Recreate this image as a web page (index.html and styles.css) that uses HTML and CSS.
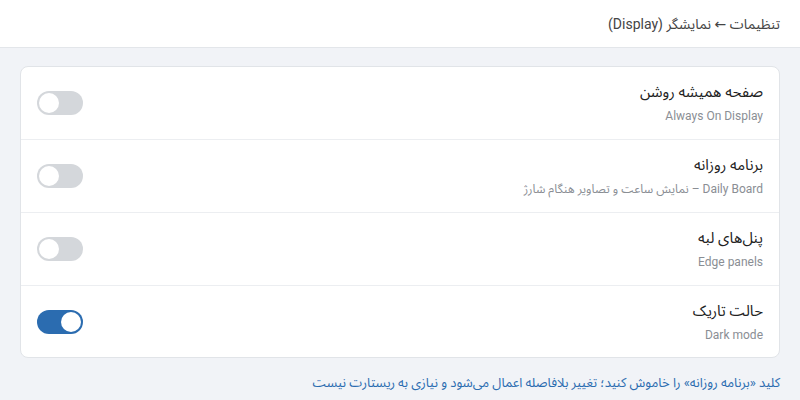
FILE: index.html
```html
<!DOCTYPE html>
<html lang="fa" dir="rtl">
<head>
<meta charset="utf-8">
<link rel="stylesheet" href="styles.css">
</head>
<body>
<header class="top">تنظیمات ← نمایشگر (Display)</header>
<main class="content">
  <section class="card">
    <div class="row">
      <div class="text">
        <div class="title">صفحه همیشه روشن</div>
        <div class="sub">Always On Display</div>
      </div>
      <span class="toggle"><span class="knob"></span></span>
    </div>
    <div class="row">
      <div class="text">
        <div class="title">برنامه روزانه</div>
        <div class="sub">Daily Board – نمایش ساعت و تصاویر هنگام شارژ</div>
      </div>
      <span class="toggle"><span class="knob"></span></span>
    </div>
    <div class="row">
      <div class="text">
        <div class="title">پنل‌های لبه</div>
        <div class="sub">Edge panels</div>
      </div>
      <span class="toggle"><span class="knob"></span></span>
    </div>
    <div class="row">
      <div class="text">
        <div class="title">حالت تاریک</div>
        <div class="sub">Dark mode</div>
      </div>
      <span class="toggle on"><span class="knob"></span></span>
    </div>
  </section>
  <p class="note">کلید «برنامه روزانه» را خاموش کنید؛ تغییر بلافاصله اعمال می‌شود و نیازی به ریستارت نیست</p>
</main>
</body>
</html>
```
FILE: styles.css
```css
* { box-sizing: border-box; }
html, body { margin: 0; padding: 0; }
body {
  width: 800px;
  height: 400px;
  background: #f1f3f7;
  font-family: "Roboto", "Noto Sans Arabic", "DejaVu Sans", sans-serif;
  color: #222;
  overflow: hidden;
}
.top {
  height: 48px;
  background: #fff;
  border-bottom: 1px solid #e3e6ea;
  padding: 0 20px;
  display: flex;
  align-items: center;
  font-size: 14px;
  line-height: 20px;
  color: #444;
}
.content {
  padding: 18px 20px 0;
}
.card {
  background: #fff;
  border: 1px solid #e1e4e8;
  border-radius: 8px;
}
.row {
  height: 73px;
  display: flex;
  align-items: center;
  justify-content: space-between;
  padding: 0 16px;
  border-bottom: 1px solid #eceef1;
}
.row:last-child { border-bottom: none; height: 71px; }
.text { display: flex; flex-direction: column; gap: 6px; }
.title { font-size: 15px; line-height: 20px; color: #222; }
.sub { font-size: 12px; line-height: 16px; color: #8a8e94; }
.toggle {
  width: 46px;
  height: 24px;
  border-radius: 12px;
  background: #d4d7db;
  display: flex;
  align-items: center;
  padding: 0 2px;
  justify-content: flex-end;
}
.toggle .knob {
  width: 20px;
  height: 20px;
  border-radius: 50%;
  background: #fff;
}
.toggle.on {
  background: #2b6cb0;
  justify-content: flex-start;
}
.note {
  margin: 16px 0 0;
  font-size: 13px;
  line-height: 18px;
  color: #2b6cb0;
}
```
